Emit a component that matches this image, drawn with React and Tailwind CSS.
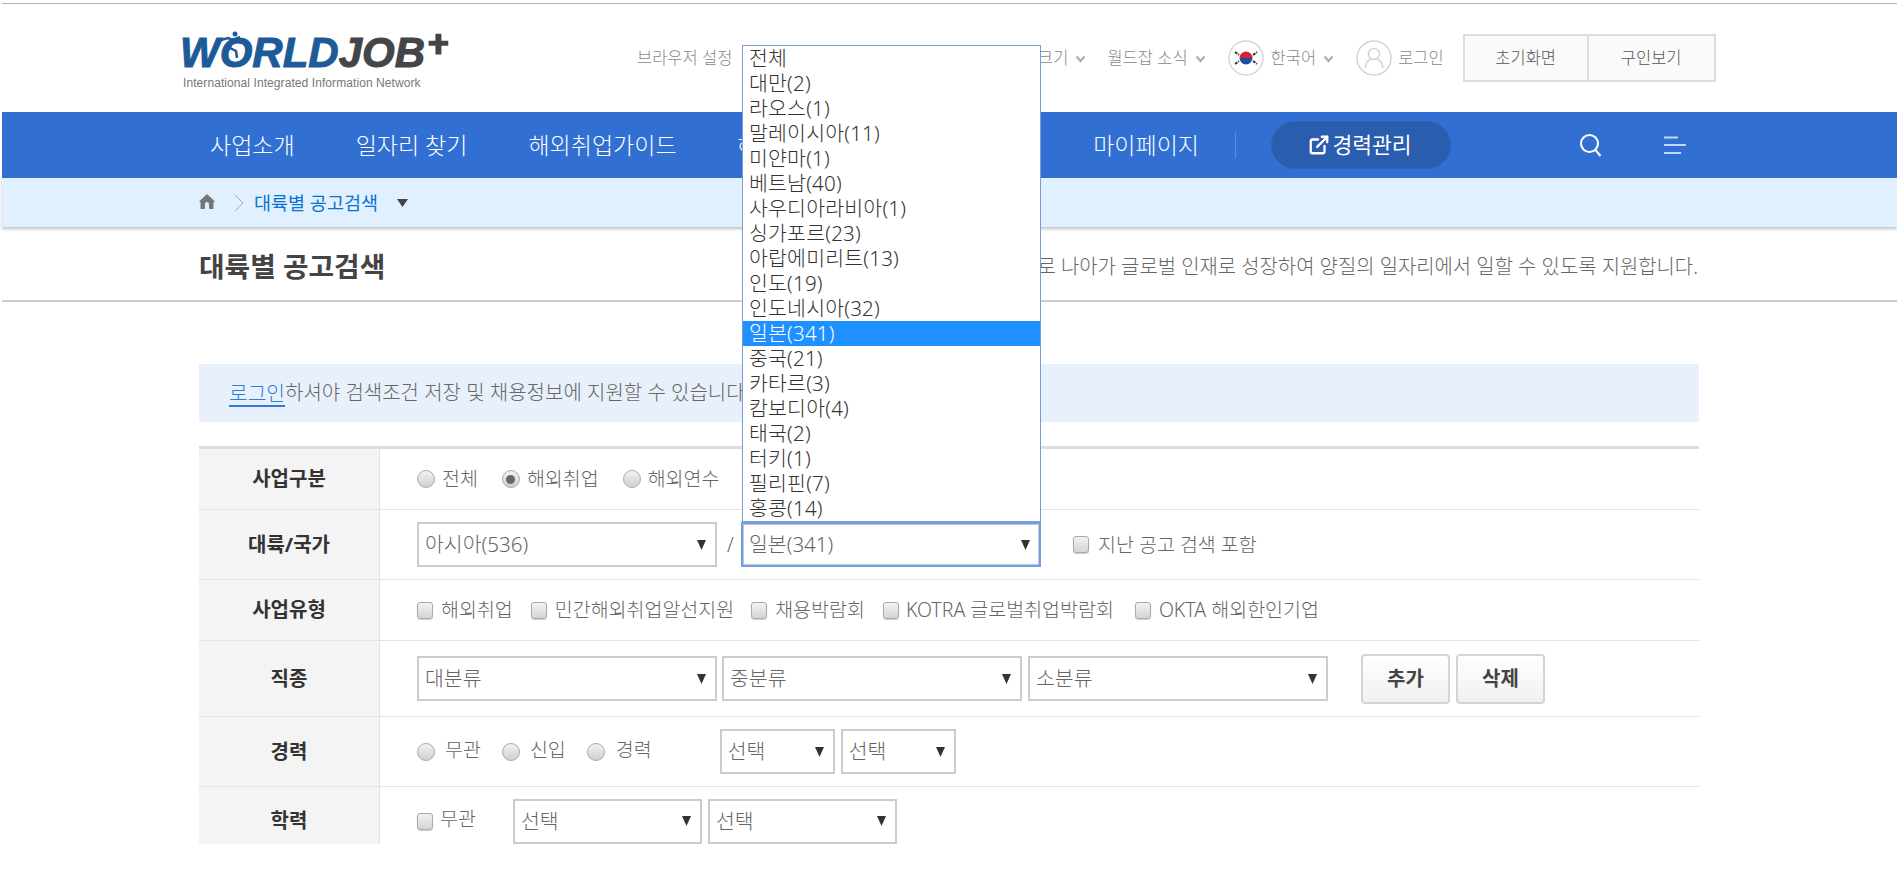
import { ExternalLink } from "lucide-react";

// ── Données ──────────────────────────────────────────────────────────
const countries = [
  "전체", "대만(2)", "라오스(1)", "말레이시아(11)", "미얀마(1)", "베트남(40)", "사우디아라비아(1)",
  "싱가포르(23)", "아랍에미리트(13)", "인도(19)", "인도네시아(32)", "일본(341)", "중국(21)",
  "카타르(3)", "캄보디아(4)", "태국(2)", "터키(1)", "필리핀(7)", "홍콩(14)",
];

function Chevron() {
  return (
    <svg width="11" height="8" viewBox="0 0 11 8" className="ml-[7px] mt-[2px]">
      <path d="M1.5 1.5 5.5 6 9.5 1.5" fill="none" stroke="#aeaeae" strokeWidth="2.2" />
    </svg>
  );
}

function Caret({ color = "#333" }) {
  return (
    <svg width="9" height="10" viewBox="0 0 9 10" className="shrink-0">
      <path d="M0 0H9L4.5 10Z" fill={color} />
    </svg>
  );
}

function Flag() {
  return (
    <svg width="36" height="36" viewBox="0 0 36 36" className="block">
      <circle cx="18" cy="18" r="17" fill="#fff" stroke="#d8d8d8" strokeWidth="1.5" />
      <path d="M11.500 18a6.500 6.500 0 0 1 13 0Z" fill="#d5213a" />
      <path d="M11.500 18a6.500 6.500 0 0 0 13 0Z" fill="#1d4f9c" />
      <g stroke="#333" strokeWidth="2" strokeDasharray="3 1">
        <path d="M7 12l4 3M25 21l4 3M7 24l4-3M25 15l4-3" />
      </g>
    </svg>
  );
}

function UserIcon() {
  return (
    <svg width="36" height="36" viewBox="0 0 36 36" fill="none" stroke="#d4d4d4" strokeWidth="1.5" className="block">
      <circle cx="18" cy="18" r="17" />
      <circle cx="18" cy="14" r="5.5" />
      <path d="M9 28c1-6 4-8.500 6-9M27 28c-1-6-4-8.500-6-9" />
    </svg>
  );
}

function Logo() {
  return (
    <div className="w-[270px] ml-[178px] mt-[27px] font-['Liberation_Sans',sans-serif] font-bold">
      <div className="flex items-start h-[42px]">
        <div className="relative text-[42px] leading-[45px] italic -mt-[1px] [-webkit-text-stroke:1px]">
          <span className="text-[#1c5b97]">WORLD</span>
          <span className="text-[#444548]">JOB</span>
          {/* coureur sur le O */}
          <svg width="26" height="28" viewBox="0 0 26 28" className="absolute left-[38px] top-[1px]">
            <circle cx="17" cy="3" r="2.500" fill="#1c5b97" />
            <path d="M3 9l7-2 5 2 7-3M14 9l-2 8-6 6M12 17l6 3 1 7" fill="none" stroke="#1c5b97" strokeWidth="2.500" />
          </svg>
        </div>
        <svg width="28" height="28" viewBox="0 0 28 28" className="ml-[1px]">
          <path d="M11 1h7v8h8v6h-8v10h-7V15H3V9h8Z" fill="#444548" />
        </svg>
      </div>
      <p className="text-[12px] leading-[14px] font-normal text-[#777] ml-[3px] mt-[3px] tracking-[0.08px] whitespace-nowrap">International Integrated Information Network</p>
    </div>
  );
}

function Header() {
  return (
    <header className="h-[108px] flex">
      <Logo />
      <div className="ml-[187px] mt-[36px] h-[36px] flex items-center text-[16.5px] text-[#888] whitespace-nowrap">
        <span>브라우저 설정</span>
        <span className="ml-[258px] w-[78px] text-right">글자크기</span>
        <Chevron />
        <span className="ml-[21px]">월드잡 소식</span>
        <Chevron />
        <span className="ml-[22px]"><Flag /></span>
        <span className="ml-[7px]">한국어</span>
        <Chevron />
        <span className="ml-[22px]"><UserIcon /></span>
        <span className="ml-[6px]">로그인</span>
      </div>
      <div className="ml-[19px] mt-[30px] h-[48px] w-[253px] flex border-2 border-[#d9dee5] bg-[#fafafa] text-[16.5px] text-[#555]">
        <span className="w-[124px] flex items-center justify-center border-r-2 border-[#d9dee5]">초기화면</span>
        <span className="flex-1 flex items-center justify-center">구인보기</span>
      </div>
    </header>
  );
}

function Nav() {
  return (
    <nav className="h-[66px] bg-[#3170d2] flex items-center pl-[208px] text-[23px] text-white whitespace-nowrap">
      <div className="flex gap-[61px]">
        <span>사업소개</span>
        <span>일자리 찾기</span>
        <span>해외취업가이드</span>
        <span>해외연수</span>
      </div>
      <span className="ml-[271px]">마이페이지</span>
      <div className="ml-[36px] h-[26px] w-px bg-[#5a8cdc]" />
      <button className="ml-[35px] w-[180px] h-[48px] rounded-full bg-[#2a5dae] border border-[#2c63b8] flex items-center justify-center gap-[2px] pr-[2px] text-[21.5px] font-normal">
        <ExternalLink size={22} strokeWidth={2.5} />
        <span>경력관리</span>
      </button>
      <svg width="24" height="24" viewBox="0 0 24 24" className="ml-[128px]" fill="none" stroke="#fff" strokeWidth="2">
        <circle cx="10.500" cy="10.500" r="8.500" />
        <path d="M16.500 17l5 6" />
      </svg>
      <svg width="22" height="20" viewBox="0 0 22 20" className="ml-[61px]" stroke="#c4d8f5" strokeWidth="2">
        <path d="M0 2.500H14M0 10H22M0 18H17" />
      </svg>
    </nav>
  );
}

function Breadcrumb() {
  return (
    <div className="relative h-[49px] bg-[#e1f0fe] shadow-[0_2px_3px_rgba(60,80,100,0.35)] flex items-center pl-[197px]">
      <svg width="16" height="15" viewBox="0 0 16 15" className="mb-[2px]">
        <path d="M8 0 16 7.500 14.500 8V15H10V10a2 2 0 0 0-4 0V15H1.500V8L0 7.500Z" fill="#777" />
      </svg>
      <svg width="10" height="18" viewBox="0 0 10 18" className="ml-[19px]">
        <path d="M1 1l8 8-8 8" fill="none" stroke="#aaa" strokeWidth="1" />
      </svg>
      <span className="ml-[10px] text-[18.5px] font-normal text-[#0b72d0]">대륙별 공고검색</span>
      <span className="ml-[19px]">
        <svg width="11" height="8" viewBox="0 0 11 8"><path d="M0 0H11L5.500 8Z" fill="#444" /></svg>
      </span>
    </div>
  );
}

function Radio({ checked }) {
  return (
    <span className="w-[18px] h-[18px] shrink-0 rounded-full border border-[#aaa] bg-gradient-to-b from-[#f2f2f2] to-[#cfcfcf] flex items-center justify-center">
      {checked && <span className="w-[9px] h-[9px] rounded-full bg-[#666]" />}
    </span>
  );
}

function Check() {
  return <span className="block w-[16px] h-[17px] shrink-0 rounded-[3px] border border-[#aaa] bg-gradient-to-b from-[#f2f2f2] to-[#d4d4d4] shadow-[0_1px_1px_rgba(0,0,0,0.2)]" />;
}

function Select({ label, width, focused, children }) {
  return (
    <div
      className={`relative h-[45px] shrink-0 flex items-center justify-between pl-[6px] pr-[9px] border-2 bg-white text-[20.5px] text-[#666] ${width} ${focused ? "border-[#6f9fe8] shadow-[inset_0_0_0_1px_#c8c8c8]" : "border-[#ccc]"}`}
    >
      <span>{label}</span>
      <Caret />
      {children}
    </div>
  );
}

function Row({ label, className, children }) {
  return (
    <div className={`flex border-b border-[#e3e3e3] ${className}`}>
      <div className="w-[181px] shrink-0 bg-[#f4f4f4] border-r border-[#e3e3e3] flex items-center justify-center text-[20px] font-bold text-[#333]">
        {label}
      </div>
      <div className="flex-1 pl-[37px] flex items-center text-[19.5px] text-[#666] whitespace-nowrap">{children}</div>
    </div>
  );
}

function SearchForm() {
  return (
    <div className="ml-[197px] w-[1500px] mt-[24px] border-t-[3px] border-[#ddd]">
      <Row label="사업구분" className="h-[61px]">
        <Radio /><span className="ml-[7px]">전체</span>
        <span className="ml-[24px]"><Radio checked /></span><span className="ml-[7px]">해외취업</span>
        <span className="ml-[24px]"><Radio /></span><span className="ml-[7px]">해외연수</span>
      </Row>
      <Row label="대륙/국가" className="h-[70px]">
        <Select label="아시아(536)" width="w-[300px]" />
        <span className="w-[24px] pl-[3px] text-center">/</span>
        <Select label="일본(341)" width="w-[300px]" focused>
          {/* liste déroulante ouverte */}
          <ul className="absolute bottom-full -left-[1px] mb-[2px] w-[299px] border border-[#7b9bd8] bg-white text-[20.5px] leading-[25px] tracking-[0.2px] text-[#333]">
            {countries.map((c) => (
              <li key={c} className={`h-[25px] pl-[6px] ${c === "일본(341)" ? "bg-[#1e90ff] text-white" : ""}`}>{c}</li>
            ))}
          </ul>
        </Select>
        <span className="ml-[32px]"><Check /></span><span className="ml-[9px]">지난 공고 검색 포함</span>
      </Row>
      <Row label="사업유형" className="h-[61px]">
        <Check /><span className="ml-[8px]">해외취업</span>
        <span className="ml-[18px]"><Check /></span><span className="ml-[8px]">민간해외취업알선지원</span>
        <span className="ml-[17px]"><Check /></span><span className="ml-[8px]">채용박람회</span>
        <span className="ml-[18px]"><Check /></span><span className="ml-[7px]">KOTRA 글로벌취업박람회</span>
        <span className="ml-[21px]"><Check /></span><span className="ml-[8px]">OKTA 해외한인기업</span>
      </Row>
      <Row label="직종" className="h-[76px]">
        <Select label="대분류" width="w-[300px]" />
        <div className="ml-[5px]"><Select label="중분류" width="w-[300px]" /></div>
        <div className="ml-[6px]"><Select label="소분류" width="w-[300px]" /></div>
        <div className="ml-[33px] flex gap-[6px] text-[20px] font-bold text-[#444]">
          <button className="w-[89px] h-[50px] rounded-[4px] border-2 border-[#d4d4d4] bg-gradient-to-b from-white to-[#f0f0f0]">추가</button>
          <button className="w-[89px] h-[50px] rounded-[4px] border-2 border-[#d4d4d4] bg-gradient-to-b from-white to-[#f0f0f0]">삭제</button>
        </div>
      </Row>
      <Row label="경력" className="h-[70px]">
        <Radio /><span className="ml-[10px] -mt-[4px]">무관</span>
        <span className="ml-[21px]"><Radio /></span><span className="ml-[10px] -mt-[4px]">신입</span>
        <span className="ml-[21px]"><Radio /></span><span className="ml-[11px] -mt-[4px]">경력</span>
        <div className="ml-[68px]"><Select label="선택" width="w-[115px]" /></div>
        <div className="ml-[6px]"><Select label="선택" width="w-[115px]" /></div>
      </Row>
      {/* la dernière ligne est coupée par le bas de la page */}
      <Row label="학력" className="h-[57px] overflow-hidden border-b-0 [&>div]:h-[68px] [&>div]:shrink-0">
        <Check /><span className="ml-[7px] -mt-[4px]">무관</span>
        <div className="ml-[37px]"><Select label="선택" width="w-[189px]" /></div>
        <div className="ml-[6px]"><Select label="선택" width="w-[189px]" /></div>
      </Row>
    </div>
  );
}

export default function App() {
  return (
    <div className="h-[878px] overflow-hidden pl-[2px] bg-white font-light font-['Noto_Sans','Noto_Sans_CJK_KR',sans-serif]">
      <div className="mt-[3px] h-px bg-[#b5b5b5]" />
      <Header />
      <Nav />
      <Breadcrumb />

      {/* ── Titre de la page ─────────────────────────────────────────── */}
      <div className="h-[75px] border-b-2 border-[#ccc] flex items-center justify-between pt-[6px] pl-[197px] pr-[199px]">
        <h1 className="text-[27.8px] font-bold text-[#444]">대륙별 공고검색</h1>
        <p className="text-[19.9px] text-[#666]">세계로 나아가 글로벌 인재로 성장하여 양질의 일자리에서 일할 수 있도록 지원합니다.</p>
      </div>

      {/* ── Message de connexion ─────────────────────────────────────── */}
      <div className="ml-[197px] w-[1500px] h-[58px] mt-[62px] bg-[#e8f0fb] flex items-center pl-[30px] text-[20px] text-[#666]">
        <a className="text-[20.3px] text-[#2f7bd6] underline underline-offset-4">로그인</a>
        <span>하셔야 검색조건 저장 및 채용정보에 지원할 수 있습니다.</span>
      </div>

      <SearchForm />
    </div>
  );
}
